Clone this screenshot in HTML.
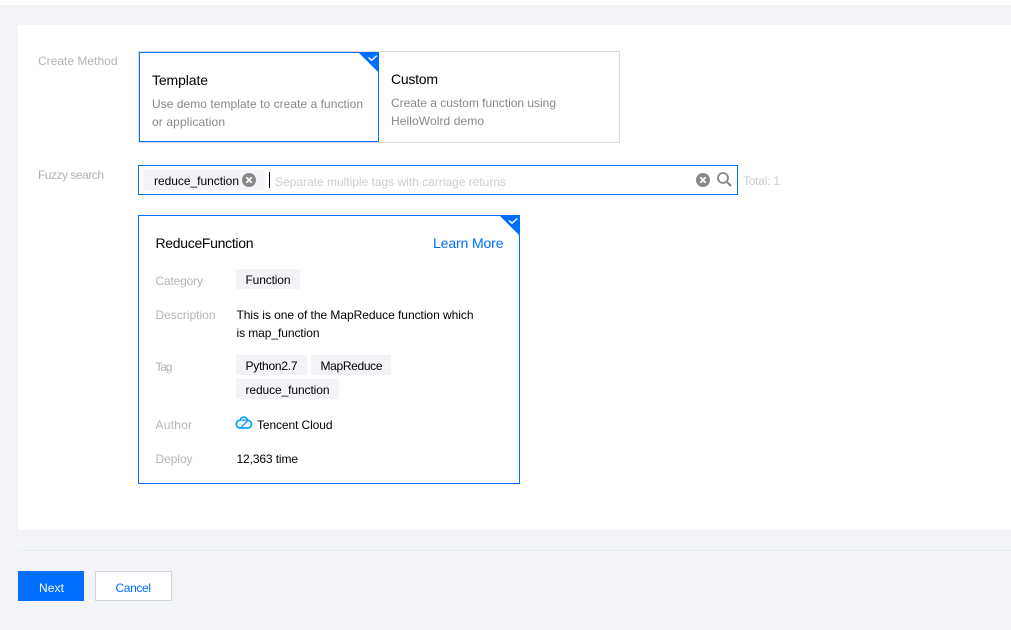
<!DOCTYPE html>
<html>
<head>
<meta charset="utf-8">
<style>
html,body{margin:0;padding:0;width:1011px;height:630px;overflow:hidden;background:#f2f4f8}
svg{display:block}
text{font-family:"Liberation Sans",sans-serif;font-size:12px;white-space:pre}
.t{font-size:14px;fill:#000}
.l{fill:#b4b4b4}
.g{fill:#888}
.k{fill:#000}
.p{fill:#ccc}
</style>
</head>
<body>
<svg width="1011" height="630" viewBox="0 0 1011 630" xmlns="http://www.w3.org/2000/svg">
<rect x="0" y="0" width="1011" height="630" fill="#f2f4f8"/>
<rect x="0" y="0" width="1011" height="5" fill="#fff"/>
<rect x="18" y="25" width="993" height="505" fill="#fff"/>
<rect x="18" y="550" width="993" height="1" fill="#e7eaef"/>

<text class="l" x="38" y="65" textLength="79.5" lengthAdjust="spacing">Create Method</text>
<rect x="138.5" y="51.5" width="481" height="91" fill="#fff" stroke="#ddd"/>
<rect x="139.5" y="52.5" width="239" height="89" fill="#fff" stroke="#006eff"/>
<path d="M358 52H379V73Z" fill="#006eff"/>
<path d="M368.5 57.5L371.5 60.4L376.8 55.6" fill="none" stroke="#fff" stroke-width="1.4"/>
<text class="t" x="152" y="85" textLength="56" lengthAdjust="spacing">Template</text>
<text class="g" x="152" y="108" textLength="211" lengthAdjust="spacing">Use demo template to create a function</text>
<text class="g" x="152" y="126" textLength="73" lengthAdjust="spacing">or application</text>
<text class="t" x="391" y="84" textLength="47" lengthAdjust="spacing">Custom</text>
<text class="g" x="391" y="107" textLength="165" lengthAdjust="spacing">Create a custom function using</text>
<text class="g" x="391" y="125" textLength="93" lengthAdjust="spacing">HelloWolrd demo</text>

<text class="l" x="38" y="179" textLength="66" lengthAdjust="spacing">Fuzzy search</text>
<rect x="138.5" y="165.5" width="599" height="29" fill="#fff" stroke="#006eff"/>
<rect x="143" y="170" width="122" height="20" fill="#f2f4f8"/>
<text class="k" x="154" y="185" textLength="85" lengthAdjust="spacing">reduce_function</text>
<circle cx="249" cy="180" r="7" fill="#888"/>
<path d="M246.3 177.3L251.7 182.7M251.7 177.3L246.3 182.7" stroke="#fff" stroke-width="1.8"/>
<rect x="269" y="172" width="1" height="16" fill="#000"/>
<text class="p" x="275" y="186" textLength="231" lengthAdjust="spacing">Separate multiple tags with carriage returns</text>
<circle cx="703" cy="180" r="7" fill="#888"/>
<path d="M700.3 177.3L705.7 182.7M705.7 177.3L700.3 182.7" stroke="#fff" stroke-width="1.8"/>
<circle cx="723" cy="178" r="5" fill="none" stroke="#888" stroke-width="1.8"/>
<path d="M726.5 181.5L731 186" stroke="#888" stroke-width="2.2"/>
<text class="p" x="743" y="185" textLength="37" lengthAdjust="spacing">Total: 1</text>

<rect x="138.5" y="215.5" width="381" height="268" fill="#fff" stroke="#006eff"/>
<path d="M499 215H520V236Z" fill="#006eff"/>
<path d="M509 220.5L512 223.2L517.3 218.5" fill="none" stroke="#fff" stroke-width="1.4"/>
<text class="t" x="155.5" y="248" textLength="98" lengthAdjust="spacing">ReduceFunction</text>
<text class="t" x="433" y="248" textLength="70.5" lengthAdjust="spacing" style="fill:#006eff">Learn More</text>

<text class="l" x="155.5" y="285" textLength="47.5" lengthAdjust="spacing">Category</text>
<rect x="236" y="269" width="64" height="20" fill="#f2f4f8"/>
<text class="k" x="245.5" y="284" textLength="45" lengthAdjust="spacing">Function</text>

<text class="l" x="155.5" y="319" textLength="60" lengthAdjust="spacing">Description</text>
<text class="k" x="236.5" y="319" textLength="237" lengthAdjust="spacing">This is one of the MapReduce function which</text>
<text class="k" x="236.5" y="337" textLength="83" lengthAdjust="spacing">is map_function</text>

<text class="l" x="155.5" y="371" textLength="17" lengthAdjust="spacing">Tag</text>
<rect x="236" y="355" width="71" height="20" fill="#f2f4f8"/>
<text class="k" x="245.5" y="370" textLength="52" lengthAdjust="spacing">Python2.7</text>
<rect x="311" y="355" width="80" height="20" fill="#f2f4f8"/>
<text class="k" x="320.5" y="370" textLength="62" lengthAdjust="spacing">MapReduce</text>
<rect x="236" y="379" width="103" height="20" fill="#f2f4f8"/>
<text class="k" x="245.5" y="394" textLength="84" lengthAdjust="spacing">reduce_function</text>

<text class="l" x="155.5" y="429" textLength="36.5" lengthAdjust="spacing">Author</text>
<path d="M240.3 428H247.5C252.8 428 252.8 420.6 247.6 420.4C246.5 416 241.5 416 240.3 420.2C235 420.2 235 428 240.3 428Z" fill="none" stroke="#00a4ff" stroke-width="1.7"/>
<path d="M240.3 428L247.4 421.2C245.6 419.6 243.4 419.6 241.8 421" fill="none" stroke="#1f9df5" stroke-width="1.5"/>
<text class="k" x="257" y="429" textLength="75.5" lengthAdjust="spacing">Tencent Cloud</text>

<text class="l" x="155.5" y="463" textLength="37" lengthAdjust="spacing">Deploy</text>
<text class="k" x="236.5" y="463" textLength="61.5" lengthAdjust="spacing">12,363 time</text>

<rect x="18" y="571" width="66" height="30" fill="#006eff"/>
<text x="39" y="592" textLength="25" lengthAdjust="spacing" style="fill:#fff">Next</text>
<rect x="95.5" y="571.5" width="76" height="29" fill="#fff" stroke="#cfd5de"/>
<text x="115.5" y="592" textLength="35.5" lengthAdjust="spacing" style="fill:#006eff">Cancel</text>
</svg>
</body>
</html>
